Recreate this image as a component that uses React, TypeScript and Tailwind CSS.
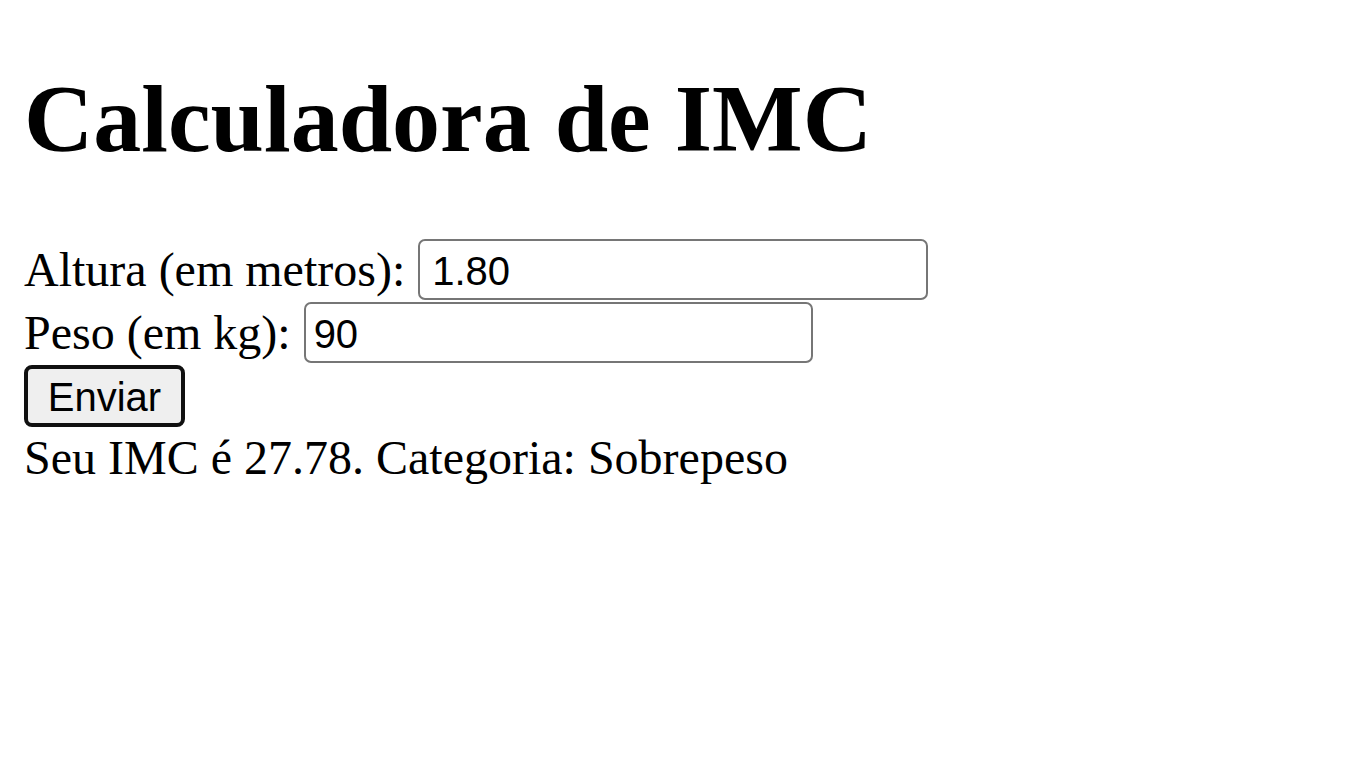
import React from "react";

export default function App() {
  return (
    <div className="min-h-screen bg-white text-black px-[24px] pt-[64px]" style={{ fontFamily: '"Liberation Serif", "Times New Roman", serif' }}>
      <h1 className="text-[96px] font-bold leading-[110px] mb-[64px]">Calculadora de IMC</h1>
      <div className="flex flex-col">
        <div className="flex items-center h-[63px] text-[48px] leading-[55px]">
          <span>Altura (em metros):</span>
          <input
            readOnly
            value="1.80"
            className="ml-[13px] h-[61px] w-[510px] border-[2.5px] border-[#767676] rounded-[7px] px-[12px] pt-[3px] text-[40px] text-black outline-none"
            style={{ fontFamily: '"Liberation Sans", Arial, sans-serif' }}
          />
        </div>
        <div className="flex items-center h-[63px] text-[48px] leading-[55px]">
          <span>Peso (em kg):</span>
          <input
            readOnly
            value="90"
            className="ml-[13px] h-[61px] w-[509px] border-[2.5px] border-[#767676] rounded-[7px] px-[8px] pt-[3px] text-[40px] text-black outline-none"
            style={{ fontFamily: '"Liberation Sans", Arial, sans-serif' }}
          />
        </div>
        <div className="flex items-center h-[64px]">
          <button
            className="h-[62px] w-[161px] border-[4.5px] border-[#101010] rounded-[8px] bg-[#efefef] pt-[2px] text-[40px] text-black leading-none"
            style={{ fontFamily: '"Liberation Sans", Arial, sans-serif' }}
          >
            Enviar
          </button>
        </div>
        <p className="text-[48px] leading-[55px] mt-[2px]">Seu IMC é 27.78. Categoria: Sobrepeso</p>
      </div>
    </div>
  );
}
